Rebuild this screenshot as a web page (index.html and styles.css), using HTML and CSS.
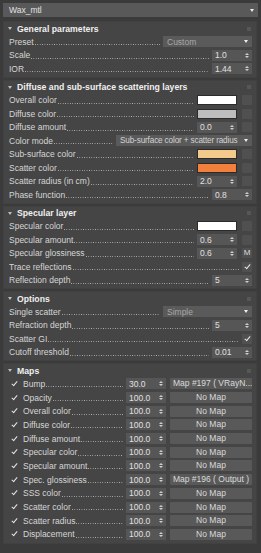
FILE: index.html
```html
<!DOCTYPE html>
<html lang="en">
<head>
    <meta charset="UTF-8">
    <meta name="viewport" content="width=device-width, initial-scale=1.0">
    <title>Wax_mtl</title>
    <link rel="stylesheet" href="styles.css">
</head>
<body>
<div class="editor">
    <div class="mtl-name">
        <span>Wax_mtl</span>
        <i class="caret"></i>
    </div>

    <div class="rollout">
        <div class="roll-head"><i class="tri"></i><span>General parameters</span><i class="grip"></i></div>
        <div class="row"><span class="lbl">Preset</span><span class="dots"></span><div class="combo dim w89"><span>Custom</span><i class="caret"></i></div></div>
        <div class="row"><span class="lbl">Scale</span><span class="dots"></span><div class="spin"><span>1.0</span><i class="arr"></i></div></div>
        <div class="row"><span class="lbl">IOR</span><span class="dots"></span><div class="spin"><span>1.44</span><i class="arr"></i></div></div>
    </div>

    <div class="rollout">
        <div class="roll-head"><i class="tri"></i><span>Diffuse and sub-surface scattering layers</span><i class="grip"></i></div>
        <div class="row"><span class="lbl">Overall color</span><span class="dots"></span><span class="swatch sw-white"></span><span class="sq"></span></div>
        <div class="row"><span class="lbl">Diffuse color</span><span class="dots"></span><span class="swatch sw-grey"></span><span class="sq"></span></div>
        <div class="row"><span class="lbl">Diffuse amount</span><span class="dots"></span><div class="spin"><span>0.0</span><i class="arr"></i></div><span class="sq"></span></div>
        <div class="row"><span class="lbl">Color mode</span><span class="dots"></span><div class="combo w136"><span class="tight">Sub-surface color + scatter radius</span><i class="caret"></i></div></div>
        <div class="row"><span class="lbl">Sub-surface color</span><span class="dots"></span><span class="swatch sw-peach"></span><span class="sq"></span></div>
        <div class="row"><span class="lbl">Scatter color</span><span class="dots"></span><span class="swatch sw-orange"></span><span class="sq"></span></div>
        <div class="row"><span class="lbl">Scatter radius (in cm)</span><span class="dots"></span><div class="spin"><span>2.0</span><i class="arr"></i></div><span class="sq"></span></div>
        <div class="row"><span class="lbl">Phase function</span><span class="dots"></span><div class="spin"><span>0.8</span><i class="arr"></i></div></div>
    </div>

    <div class="rollout">
        <div class="roll-head"><i class="tri"></i><span>Specular layer</span><i class="grip"></i></div>
        <div class="row"><span class="lbl">Specular color</span><span class="dots"></span><span class="swatch sw-white"></span><span class="sq"></span></div>
        <div class="row"><span class="lbl">Specular amount</span><span class="dots"></span><div class="spin"><span>0.6</span><i class="arr"></i></div><span class="sq"></span></div>
        <div class="row"><span class="lbl">Specular glossiness</span><span class="dots"></span><div class="spin"><span>0.6</span><i class="arr"></i></div><span class="sq m">M</span></div>
        <div class="row"><span class="lbl">Trace reflections</span><span class="dots"></span><span class="check"></span></div>
        <div class="row"><span class="lbl">Reflection depth</span><span class="dots"></span><div class="spin"><span>5</span><i class="arr"></i></div></div>
    </div>

    <div class="rollout">
        <div class="roll-head"><i class="tri"></i><span>Options</span><i class="grip"></i></div>
        <div class="row"><span class="lbl">Single scatter</span><span class="dots"></span><div class="combo dim w89"><span>Simple</span><i class="caret"></i></div></div>
        <div class="row"><span class="lbl">Refraction depth</span><span class="dots"></span><div class="spin"><span>5</span><i class="arr"></i></div></div>
        <div class="row"><span class="lbl">Scatter GI</span><span class="dots"></span><span class="check"></span></div>
        <div class="row"><span class="lbl">Cutoff threshold</span><span class="dots"></span><div class="spin"><span>0.01</span><i class="arr"></i></div></div>
    </div>

    <div class="rollout maps">
        <div class="roll-head"><i class="tri"></i><span>Maps</span><i class="grip"></i></div>
        <div class="row"><i class="chk"></i><span class="lbl">Bump</span><span class="dots"></span><div class="spin"><span>30.0</span><i class="arr"></i></div><span class="btn left">Map #197 ( VRayN...</span></div>
        <div class="row"><i class="chk"></i><span class="lbl">Opacity</span><span class="dots"></span><div class="spin"><span>100.0</span><i class="arr"></i></div><span class="btn">No Map</span></div>
        <div class="row"><i class="chk"></i><span class="lbl">Overall color</span><span class="dots"></span><div class="spin"><span>100.0</span><i class="arr"></i></div><span class="btn">No Map</span></div>
        <div class="row"><i class="chk"></i><span class="lbl">Diffuse color</span><span class="dots"></span><div class="spin"><span>100.0</span><i class="arr"></i></div><span class="btn">No Map</span></div>
        <div class="row"><i class="chk"></i><span class="lbl">Diffuse amount</span><span class="dots"></span><div class="spin"><span>100.0</span><i class="arr"></i></div><span class="btn">No Map</span></div>
        <div class="row"><i class="chk"></i><span class="lbl">Specular color</span><span class="dots"></span><div class="spin"><span>100.0</span><i class="arr"></i></div><span class="btn">No Map</span></div>
        <div class="row"><i class="chk"></i><span class="lbl">Specular amount</span><span class="dots"></span><div class="spin"><span>100.0</span><i class="arr"></i></div><span class="btn">No Map</span></div>
        <div class="row"><i class="chk"></i><span class="lbl">Spec. glossiness</span><span class="dots"></span><div class="spin"><span>100.0</span><i class="arr"></i></div><span class="btn">Map #196 ( Output )</span></div>
        <div class="row"><i class="chk"></i><span class="lbl">SSS color</span><span class="dots"></span><div class="spin"><span>100.0</span><i class="arr"></i></div><span class="btn">No Map</span></div>
        <div class="row"><i class="chk"></i><span class="lbl">Scatter color</span><span class="dots"></span><div class="spin"><span>100.0</span><i class="arr"></i></div><span class="btn">No Map</span></div>
        <div class="row"><i class="chk"></i><span class="lbl">Scatter radius</span><span class="dots"></span><div class="spin"><span>100.0</span><i class="arr"></i></div><span class="btn">No Map</span></div>
        <div class="row"><i class="chk"></i><span class="lbl">Displacement</span><span class="dots"></span><div class="spin"><span>100.0</span><i class="arr"></i></div><span class="btn">No Map</span></div>
    </div>
</div>
</body>
</html>
```

FILE: styles.css
```css
body {
    margin: 0;
    background-color: #3b3b3b;
    font-family: "Liberation Sans", Arial, sans-serif;
    font-size: 8.5px;
    color: #d6d6d6;
}
.editor {
    padding: 3px 3px 0 3px;
}
.mtl-name {
    height: 14px;
    background-color: #595959;
    display: flex;
    align-items: center;
    justify-content: space-between;
    padding: 0 4px 0 6px;
    margin-bottom: 4px;
    color: #e2e2e2;
}
.rollout {
    background-color: #454545;
    border: 1px solid #414141;
    margin: 0 1px 2px 0;
    padding: 0 4px 1px 5px;
}
.maps {
    padding-bottom: 2px;
}
.roll-head {
    height: 13px;
    display: flex;
    align-items: center;
    font-weight: bold;
    font-size: 8.7px;
    color: #f0f0f0;
}
.tri {
    width: 0;
    height: 0;
    border-left: 2px solid transparent;
    border-right: 2px solid transparent;
    border-top: 3px solid #bdbdbd;
    margin: 0 5px 0 -1px;
}
.grip {
    margin-left: auto;
    margin-right: 1px;
    width: 4px;
    height: 4px;
    background-image: radial-gradient(circle, #6a6a6a 0.6px, transparent 0.8px);
    background-size: 2px 2px;
}
.row {
    height: 13.5px;
    display: flex;
    align-items: center;
}
.maps .row {
    height: 13.7px;
}
.lbl {
    white-space: nowrap;
}
.dots {
    flex: 1;
    align-self: flex-end;
    height: 1px;
    margin: 0 3px 3.5px 1px;
    background-image: linear-gradient(to right, #b4b4b4 1px, transparent 1px);
    background-size: 2.4px 1px;
    background-repeat: repeat-x;
}
.spin {
    width: 40px;
    height: 11px;
    box-sizing: border-box;
    padding: 0 3px;
    background-color: #565656;
    display: flex;
    align-items: center;
    justify-content: space-between;
    color: #e0e0e0;
}
.arr {
    display: flex;
    flex-direction: column;
    gap: 1px;
}
.arr::before,
.arr::after {
    content: "";
    width: 0;
    height: 0;
    border-left: 2px solid transparent;
    border-right: 2px solid transparent;
}
.arr::before {
    border-bottom: 2px solid #cfcfcf;
}
.arr::after {
    border-top: 2px solid #cfcfcf;
}
.combo {
    height: 11px;
    box-sizing: border-box;
    padding: 0 4px;
    background-color: #5a5a5a;
    display: flex;
    align-items: center;
    justify-content: space-between;
    color: #d2d2d2;
    white-space: nowrap;
}
.combo.dim {
    color: #a9a9a9;
}
.tight {
    font-size: 8.2px;
    letter-spacing: -0.15px;
}
.w89 {
    width: 89px;
}
.w136 {
    width: 136px;
}
.caret {
    width: 0;
    height: 0;
    flex-shrink: 0;
    border-left: 2.5px solid transparent;
    border-right: 2.5px solid transparent;
    border-top: 3px solid #eeeeee;
}
.swatch {
    width: 40px;
    height: 10px;
    box-sizing: border-box;
    border: 1px solid #2b2b2b;
}
.sw-white {
    background-color: #ffffff;
}
.sw-grey {
    background-color: #bdbdbd;
}
.sw-peach {
    background-color: #f3c98c;
}
.sw-orange {
    background-color: #f0803c;
}
.sq {
    width: 10px;
    height: 10px;
    margin-left: 5px;
    background-color: #505050;
    border-radius: 1px;
}
.sq.m {
    color: #dcdcdc;
    text-align: center;
    line-height: 10px;
    font-size: 8px;
}
.check,
.chk {
    width: 10px;
    height: 10px;
    display: flex;
    align-items: center;
    justify-content: center;
}
.check {
    background-color: #505050;
}
.chk {
    margin-right: 4px;
}
.check::after,
.chk::after {
    content: "";
    width: 2px;
    height: 5px;
    margin-top: -2px;
    border: solid #e6e6e6;
    border-width: 0 1.5px 1.5px 0;
    transform: rotate(40deg);
}
.btn {
    width: 82px;
    height: 11px;
    margin-left: 4px;
    background-color: #595959;
    border-radius: 1px;
    text-align: center;
    line-height: 11px;
    color: #dadada;
    white-space: nowrap;
    overflow: hidden;
}
.btn.left {
    text-align: left;
    padding-left: 3px;
    box-sizing: border-box;
}
```
